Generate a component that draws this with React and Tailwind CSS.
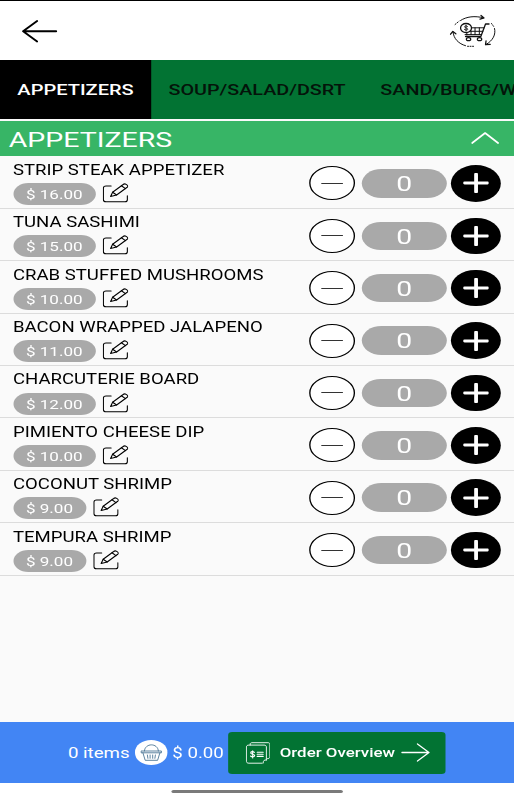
const items = [
  { id: 1, name: 'STRIP STEAK APPETIZER', price: 16 },
  { id: 2, name: 'TUNA SASHIMI', price: 15 },
  { id: 3, name: 'CRAB STUFFED MUSHROOMS', price: 10 },
  { id: 4, name: 'BACON WRAPPED JALAPENO', price: 11 },
  { id: 5, name: 'CHARCUTERIE BOARD', price: 12 },
  { id: 6, name: 'PIMIENTO CHEESE DIP', price: 10 },
  { id: 7, name: 'COCONUT SHRIMP', price: 9 },
  { id: 8, name: 'TEMPURA SHRIMP', price: 9 },
];

const tabs = ['APPETIZERS', 'SOUP/SALAD/DSRT', 'SAND/BURG/W'];

function Icon({ viewBox, className, children, strokeWidth = 1.3 }) {
  return (
    <svg
      viewBox={viewBox}
      preserveAspectRatio="none"
      className={`shrink-0 ${className}`}
      fill="none"
      stroke="currentColor"
      strokeWidth={strokeWidth}
      strokeLinecap="round"
      strokeLinejoin="round"
    >
      {children}
    </svg>
  );
}

function CartCycleIcon() {
  return (
    <Icon viewBox="0 0 47 34" className="w-[34.8px] h-[34px] text-[#111]" strokeWidth={1}>
      {/* rotating arrows */}
      <path d="M11 6.500C17 2.500 25 1.600 34 3.800" />
      <path d="M5.500 10.500l4-3.300" strokeDasharray="1 1.500" />
      <path d="M31.500 1.500l3 2.400-4 1.300" strokeWidth="1.300" />
      <path d="M45 14.500c1.500 6-1.500 12-8.500 16" />
      <path d="M42 9.500l2.500 3.500" strokeDasharray="1 1.500" />
      <path d="M36.500 27l-.500 3.700 4.700-.300" strokeWidth="1.300" />
      <path d="M3.500 18C4 24.500 9 29.800 16 31.700" />
      <path d="M18 32.300h6" strokeDasharray="1 1.500" />
      <path d="M1 20.200l2.300-2.700 3 2.300" strokeWidth="1.300" />
      {/* cart */}
      <path d="M39.500 10h-3.500L31.300 22.500H16" strokeWidth="1.300" />
      <path d="M34.500 13.800H22M33.300 17.300H21M32 20.600H15.500M25.500 13.800v6.800M29.800 13.800v6.800M21.500 17v3.600M17.300 18.500v2.500" />
      <ellipse cx="19" cy="25.200" rx="2.200" ry="1.500" strokeWidth="1.200" />
      <ellipse cx="30" cy="25.200" rx="2.200" ry="1.500" strokeWidth="1.200" />
      <ellipse cx="16.500" cy="14" rx="5.500" ry="4.500" fill="white" strokeWidth="1.300" />
      <path d="M18 12.500c-1-1-3-.700-3 .300 0 1.500 3.200.900 3.200 2.400 0 1.200-2.400 1.200-3.400.200M16.500 11.200v5.600" strokeWidth=".9" />
    </Icon>
  );
}

function EditIcon() {
  return (
    <Icon viewBox="0 0 26 20" className="w-[19.3px] h-[20px] text-black" strokeWidth={1.1}>
      <path d="M8.500 3H3.500C1.800 3 .800 3.700 .800 5v11.800c0 1.300.900 2 2.600 2h19c1.700 0 2.300-.700 2.300-2v-4" />
      <path d="M8 13.500l2-4.300L20.500 1.500c1-.800 2-.700 3-.100l1 .700c.900.700.900 1.400 0 2.100L14 12z" />
      <path d="M10 9.200l4 2.800M18.800 2.800l4 2.800" />
    </Icon>
  );
}

function BasketIcon() {
  return (
    <Icon viewBox="0 0 22 17" className="w-[16.3px] h-[17px] text-[#4a7594]" strokeWidth={0.9}>
      <path d="M1 7h20v1.800H1zM2.500 8.800l2.300 7.500h12.400l2.300-7.500" />
      <path d="M4 7C4.500-1.300 17.500-1.300 18 7" />
      <path d="M7 11l.500 3.300M9.700 11v3.300M12.300 11v3.300M15 11l-.500 3.300" />
    </Icon>
  );
}

function BillsIcon() {
  return (
    <Icon viewBox="0 0 25 22" className="w-[18.5px] h-[22px] text-white" strokeWidth={0.9}>
      <path d="M4.500 3V2c0-.800.800-1.300 1.800-1.300h16c1.200 0 1.900.600 1.900 1.500v12.500c0 1.300-1 2-2.400 2" />
      <path d="M16.500 21.200H3.200C1.600 21.200.700 20.500.700 19.300V5c0-1.200.900-1.900 2.500-1.900h15.200c1.500 0 2.300.700 2.300 1.900v13" />
      <path d="M20.700 18c-2.500-.300-3.200.700-3.200 3" />
      <path d="M11.500 10.200h6M11.500 12.300h6M11.500 14.400h6" strokeWidth="1.100" />
      <path d="M8.700 10.300C7.500 9.200 5 9.500 5 10.900c0 1.600 4 1 4 2.700 0 1.400-2.900 1.500-4.200.400M7 8.700v7.200" strokeWidth="1.100" />
    </Icon>
  );
}

function MenuRow({ item }) {
  return (
    <li className="flex h-[52.4px] border-b border-[#dcdcdc] px-[9.6px]">
      <div className="flex-1 pt-[3.5px]">
        <p className="text-[13.75px] leading-[20px] whitespace-nowrap text-black">{item.name}</p>
        <div className="mt-[3.2px] flex items-start">
          <span className="h-[22px] rounded-full bg-[#a9a9a9] px-[9.6px] text-[12.65px] leading-[23px] text-white">
            $ {item.price.toFixed(2)}
          </span>
          <span className="ml-[5.2px]">
            <EditIcon />
          </span>
        </div>
      </div>
      <div className="flex h-[54px] items-center">
        <button className="flex h-[34px] w-[34px] items-center justify-center rounded-full border border-black bg-white">
          <span className="h-px w-[15.5px] bg-[#333]" />
        </button>
        <span className="ml-[4.8px] h-[28.5px] w-[63.4px] rounded-full bg-[#a9a9a9] text-center text-[21px] leading-[30.5px] text-white">
          0
        </span>
        <button className="ml-[3.3px] flex h-[36.5px] w-[36.8px] items-center justify-center rounded-full bg-black text-white">
          <Icon viewBox="0 0 26 20" className="h-[20px] w-[19.3px]" strokeWidth={3}>
            <path d="M1.500 10h23" strokeWidth="2.800" />
            <path d="M13 1.500v17" strokeWidth="3.800" />
          </Icon>
        </button>
      </div>
    </li>
  );
}

export default function App() {
  return (
    <div className="h-[800px] w-[514px] overflow-hidden bg-[#fafafa]">
      {/* everything is laid out at 380.74px and widened to fill the window */}
      <div className="flex h-[800px] w-[380.74px] origin-top-left scale-x-[1.35] flex-col overflow-hidden font-['Roboto',sans-serif]">
        <header className="flex h-[60px] shrink-0 items-start justify-between border-t border-black bg-white pl-[16px] pr-[13px]">
          <Icon viewBox="0 0 36 24" className="mt-[17.5px] h-[24px] w-[26.7px] text-black" strokeWidth={2}>
            <path d="M1.500 12.200h33M15.500 2L1.500 12.200 15.500 22.500" />
          </Icon>
          <span className="mt-[12.5px]">
            <CartCycleIcon />
          </span>
        </header>

        <nav className="flex h-[58.5px] shrink-0 overflow-hidden bg-[#027333]">
          {tabs.map((tab, i) => (
            <button
              key={tab}
              className={`h-full shrink-0 px-[12.85px] font-medium whitespace-nowrap ${
                i === 0 ? 'bg-black pt-[2px] text-[14.85px] text-white' : 'pt-[3.5px] text-[14.65px] text-[#04140a]'
              }`}
            >
              {tab}
            </button>
          ))}
        </nav>

        <div className="mt-[2.5px] flex h-[34.8px] shrink-0 items-center justify-between bg-[#37b566] pr-[11px] pl-[6.5px] text-white">
          <h2 className="pt-[2px] text-[21.1px] leading-[35px]">APPETIZERS</h2>
          <Icon viewBox="0 0 28 12" className="h-[12px] w-[20.7px]" strokeWidth={1.7}>
            <path d="M1 11L14 1l13 10" />
          </Icon>
        </div>

        <ul className="flex-1 pt-[0.6px]">
          {items.map(item => (
            <MenuRow key={item.id} item={item} />
          ))}
        </ul>

        <footer className="flex h-[61px] shrink-0 items-center bg-[#4285f4] pl-[50.3px] text-white">
          <span className="w-[46px] pt-[2px] text-[13.85px] whitespace-nowrap">0 items</span>
          <span className="ml-[3.3px] flex h-[24.5px] w-[24.5px] shrink-0 items-center justify-center rounded-full bg-white">
            <BasketIcon />
          </span>
          <span className="ml-[3.5px] w-[38px] pt-[2px] text-[13.85px] whitespace-nowrap">$ 0.00</span>
          <button className="ml-[3.2px] flex h-[42px] w-[161.5px] shrink-0 items-center rounded-[3px] bg-[#027333] pl-[13px]">
            <BillsIcon />
            <span className="ml-[6.9px] w-[86px] pt-[2px] text-left text-[12.5px] font-medium whitespace-nowrap">Order Overview</span>
            <Icon viewBox="0 0 29 19" className="ml-[4px] h-[19px] w-[21.5px]" strokeWidth={1.3}>
              <path d="M1 9.500h27M16.500 1L28 9.500 16.500 18" />
            </Icon>
          </button>
        </footer>

        <div className="flex h-[17px] shrink-0 justify-center bg-white pt-[6.5px]">
          <span className="h-[3px] w-[126.7px] rounded-full bg-[#7a7a7a]" />
        </div>
      </div>
    </div>
  );
}
